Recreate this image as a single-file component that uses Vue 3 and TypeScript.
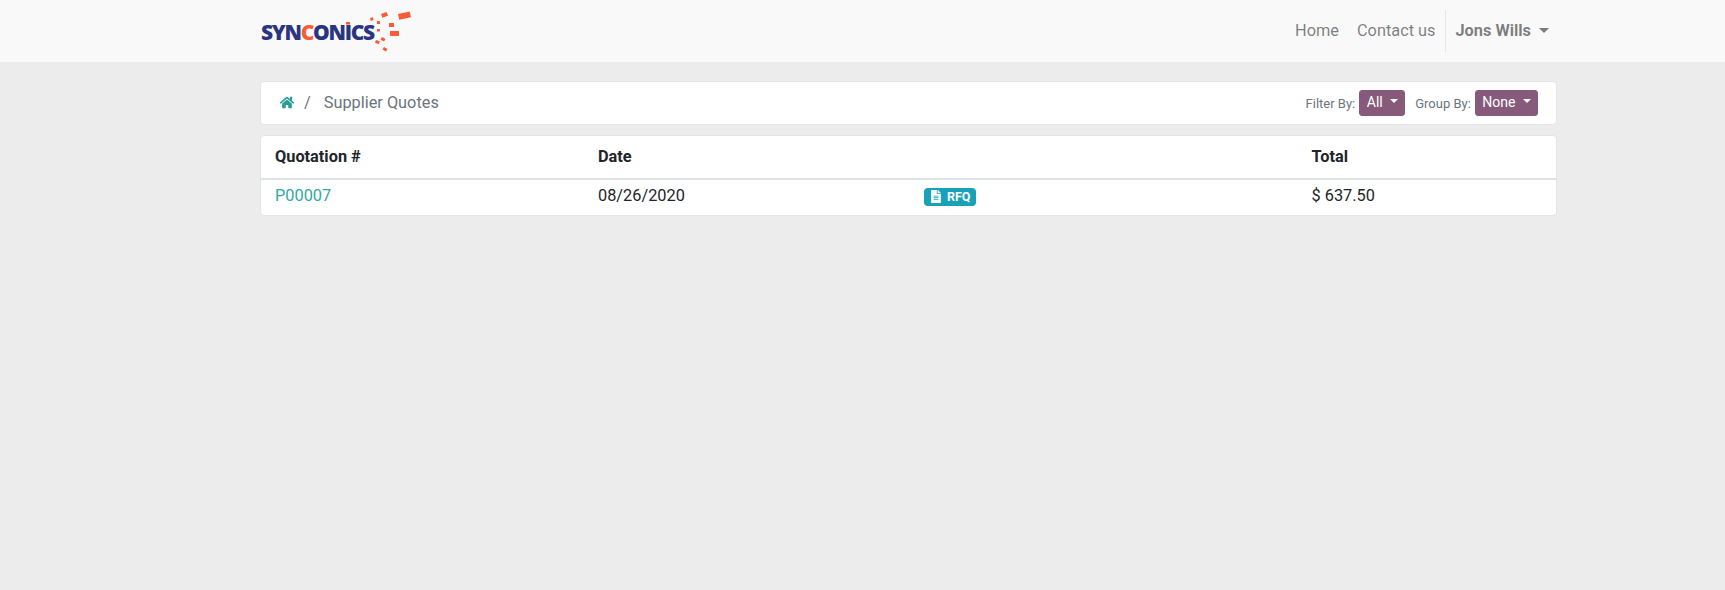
<script setup lang="ts">
interface Quote { id: string; date: string; status: string; total: string }
const quotes: Quote[] = [{ id: 'P00007', date: '08/26/2020', status: 'RFQ', total: '$ 637.50' }]
const sparks: [number, number, number, number, number][] = [
  [110, 18, 3, 3, -15], [121, 14, 6, 4, -20], [138, 14, 12, 6, -12], [117, 21, 3, 3, 0],
  [129, 23, 5, 4, 0], [117, 29, 3, 2.500, 0], [130, 31, 9, 5, 0], [116, 40, 4, 3, 20],
  [122, 37, 4, 3, 30], [124, 47, 4, 3, 30], [86, 22, 4, 2.500, 0],
]
</script>

<template>
  <div class="page">
    <header class="nav">
      <div class="nav-inner">
        <a class="logo">
          <span class="logo-text">SYN<em>C</em>ONICS</span>
          <svg class="sparks" width="170" height="62" viewBox="0 0 170 62">
            <rect v-for="(s, i) in sparks" :key="i" :x="s[0]" :y="s[1]" :width="s[2]" :height="s[3]"
              :transform="`rotate(${s[4]} ${s[0]} ${s[1]})`" fill="#fb5a36" />
          </svg>
        </a>
        <nav class="links">
          <a>Home</a>
          <a>Contact us</a>
          <span class="divider"></span>
          <a class="user">Jons Wills<i class="caret"></i></a>
        </nav>
      </div>
    </header>
    <main class="main">
      <section class="card crumbs">
        <div class="crumb-left">
          <svg class="home" width="16" height="13" viewBox="0 0 576 512">
            <path fill="currentColor" d="M280.4 148.300 96 300.100V464a16 16 0 0 0 16 16l112-.3a16 16 0 0 0 15.900-16V368a16 16 0 0 1 16-16h64a16 16 0 0 1 16 16v95.600a16 16 0 0 0 16 16l112 .4a16 16 0 0 0 16-16V300L295.700 148.300a12.200 12.200 0 0 0-15.300 0zM571.600 251.500 488 182.600V44a12 12 0 0 0-12-12h-56a12 12 0 0 0-12 12v72.600L318.500 43a48 48 0 0 0-61 0L4.300 251.500a12 12 0 0 0-1.600 16.900l25.500 31A12 12 0 0 0 45.200 301l235.200-193.700a12.200 12.200 0 0 1 15.300 0L530.900 301a12 12 0 0 0 16.900-1.600l25.500-31a12 12 0 0 0-1.700-16.900z"/>
          </svg>
          <span class="slash">/</span>
          <span class="crumb-title">Supplier Quotes</span>
        </div>
        <div class="filters">
          <label>Filter By:</label>
          <button class="btn">All<i class="caret small"></i></button>
          <label class="second">Group By:</label>
          <button class="btn">None<i class="caret small"></i></button>
        </div>
      </section>
      <section class="card table-card">
        <div class="row head">
          <div>Quotation #</div>
          <div>Date</div>
          <div></div>
          <div>Total</div>
        </div>
        <div v-for="q in quotes" :key="q.id" class="row body-row">
          <div><a class="qlink">{{ q.id }}</a></div>
          <div>{{ q.date }}</div>
          <div>
            <span class="badge">
              <svg width="10" height="13" viewBox="0 0 384 512">
                <path fill="currentColor" d="M224 136V0H24C10.700 0 0 10.700 0 24v464c0 13.300 10.700 24 24 24h336c13.300 0 24-10.700 24-24V160H248c-13.200 0-24-10.800-24-24zm64 236c0 6.600-5.400 12-12 12H108c-6.600 0-12-5.400-12-12v-8c0-6.600 5.400-12 12-12h168c6.600 0 12 5.400 12 12v8zm0-64c0 6.600-5.400 12-12 12H108c-6.600 0-12-5.400-12-12v-8c0-6.600 5.400-12 12-12h168c6.600 0 12 5.400 12 12v8zm0-72v8c0 6.600-5.400 12-12 12H108c-6.600 0-12-5.400-12-12v-8c0-6.600 5.400-12 12-12h168c6.600 0 12 5.400 12 12zm96-114.100v6.100H256V0h6.100c6.400 0 12.500 2.500 17 7l97.900 98c4.500 4.500 7 10.600 7 16.900z"/>
              </svg>
              {{ q.status }}
            </span>
          </div>
          <div>{{ q.total }}</div>
        </div>
      </section>
    </main>
  </div>
</template>

<style>
html, body { margin: 0; background: #ececec; }
</style>

<style scoped>
.page { min-height: 590px; font-family: Roboto, "Liberation Sans", sans-serif; font-size: 16.320px; color: #212529; }
.nav { height: 62px; background: #f9f9f9; }
.nav-inner { margin-left: 260px; width: 1298px; height: 62px; display: flex; align-items: center; justify-content: space-between; }
.logo { position: relative; display: block; width: 170px; height: 62px; }
.logo-text { position: absolute; left: 1px; top: 20px; line-height: 24px; font-family: "Open Sans", sans-serif; font-weight: 800; font-size: 21px; letter-spacing: -1.300px; color: #2b3480; }
.logo-text em { font-style: normal; color: #fb5a36; }
.sparks { position: absolute; left: 0; top: 0; }
.links { display: flex; align-items: center; height: 42px; color: rgba(0, 0, 0, 0.5); }
.links a { padding: 0 9px 2px; }
.links a:first-child { margin-left: -1px; }
.divider { width: 1px; height: 42px; background: #e6e6e6; margin: 0 0 0 1px; }
.user { font-weight: 700; display: flex; align-items: center; }
.caret { display: inline-block; margin-left: 8px; border-top: 5px solid currentColor; border-left: 5px solid transparent; border-right: 5px solid transparent; }
.main { margin-left: 260px; width: 1297px; padding-top: 19px; }
.card { background: #fff; border: 1px solid #e2e4e8; border-radius: 4px; box-sizing: border-box; }
.crumbs { height: 44px; display: flex; align-items: center; justify-content: space-between; padding: 0 18px; }
.crumb-left { display: flex; align-items: center; padding-bottom: 2px; }
.home { color: #2a9d9a; }
.slash { color: #6c757d; margin-left: 9px; }
.crumb-title { color: #6c757d; margin-left: 13px; }
.filters { display: flex; align-items: center; font-size: 13px; color: #6c757d; }
.filters .second { margin-left: 10px; }
.btn { font: inherit; font-size: 14px; line-height: 21px; height: 26px; margin-left: 4px; padding: 0 6.500px 2px; color: #fff; background: #875a7b; border: 1px solid #875a7b; border-radius: 3px; display: flex; align-items: center; }
.caret.small { margin-left: 7px; margin-bottom: 2px; border-top-width: 4px; border-left-width: 4px; border-right-width: 4px; }
.table-card { margin-top: 10px; overflow: hidden; }
.row { display: grid; grid-template-columns: 323px 326px 387.500px 1fr; padding-left: 14px; }
.head { height: 44px; align-items: center; font-weight: 700; border-bottom: 2px solid #dee2e6; padding-bottom: 2px; box-sizing: border-box; }
.body-row { height: 35px; align-items: center; padding-bottom: 4px; box-sizing: border-box; }
.qlink { color: #30a8a5; }
.badge { display: inline-flex; align-items: center; gap: 6px; height: 18px; margin-top: 4px; padding: 0 5px 0 7px; background: #17a2b8; color: #fff; border-radius: 4px; font-size: 12.500px; font-weight: 700; }
</style>
